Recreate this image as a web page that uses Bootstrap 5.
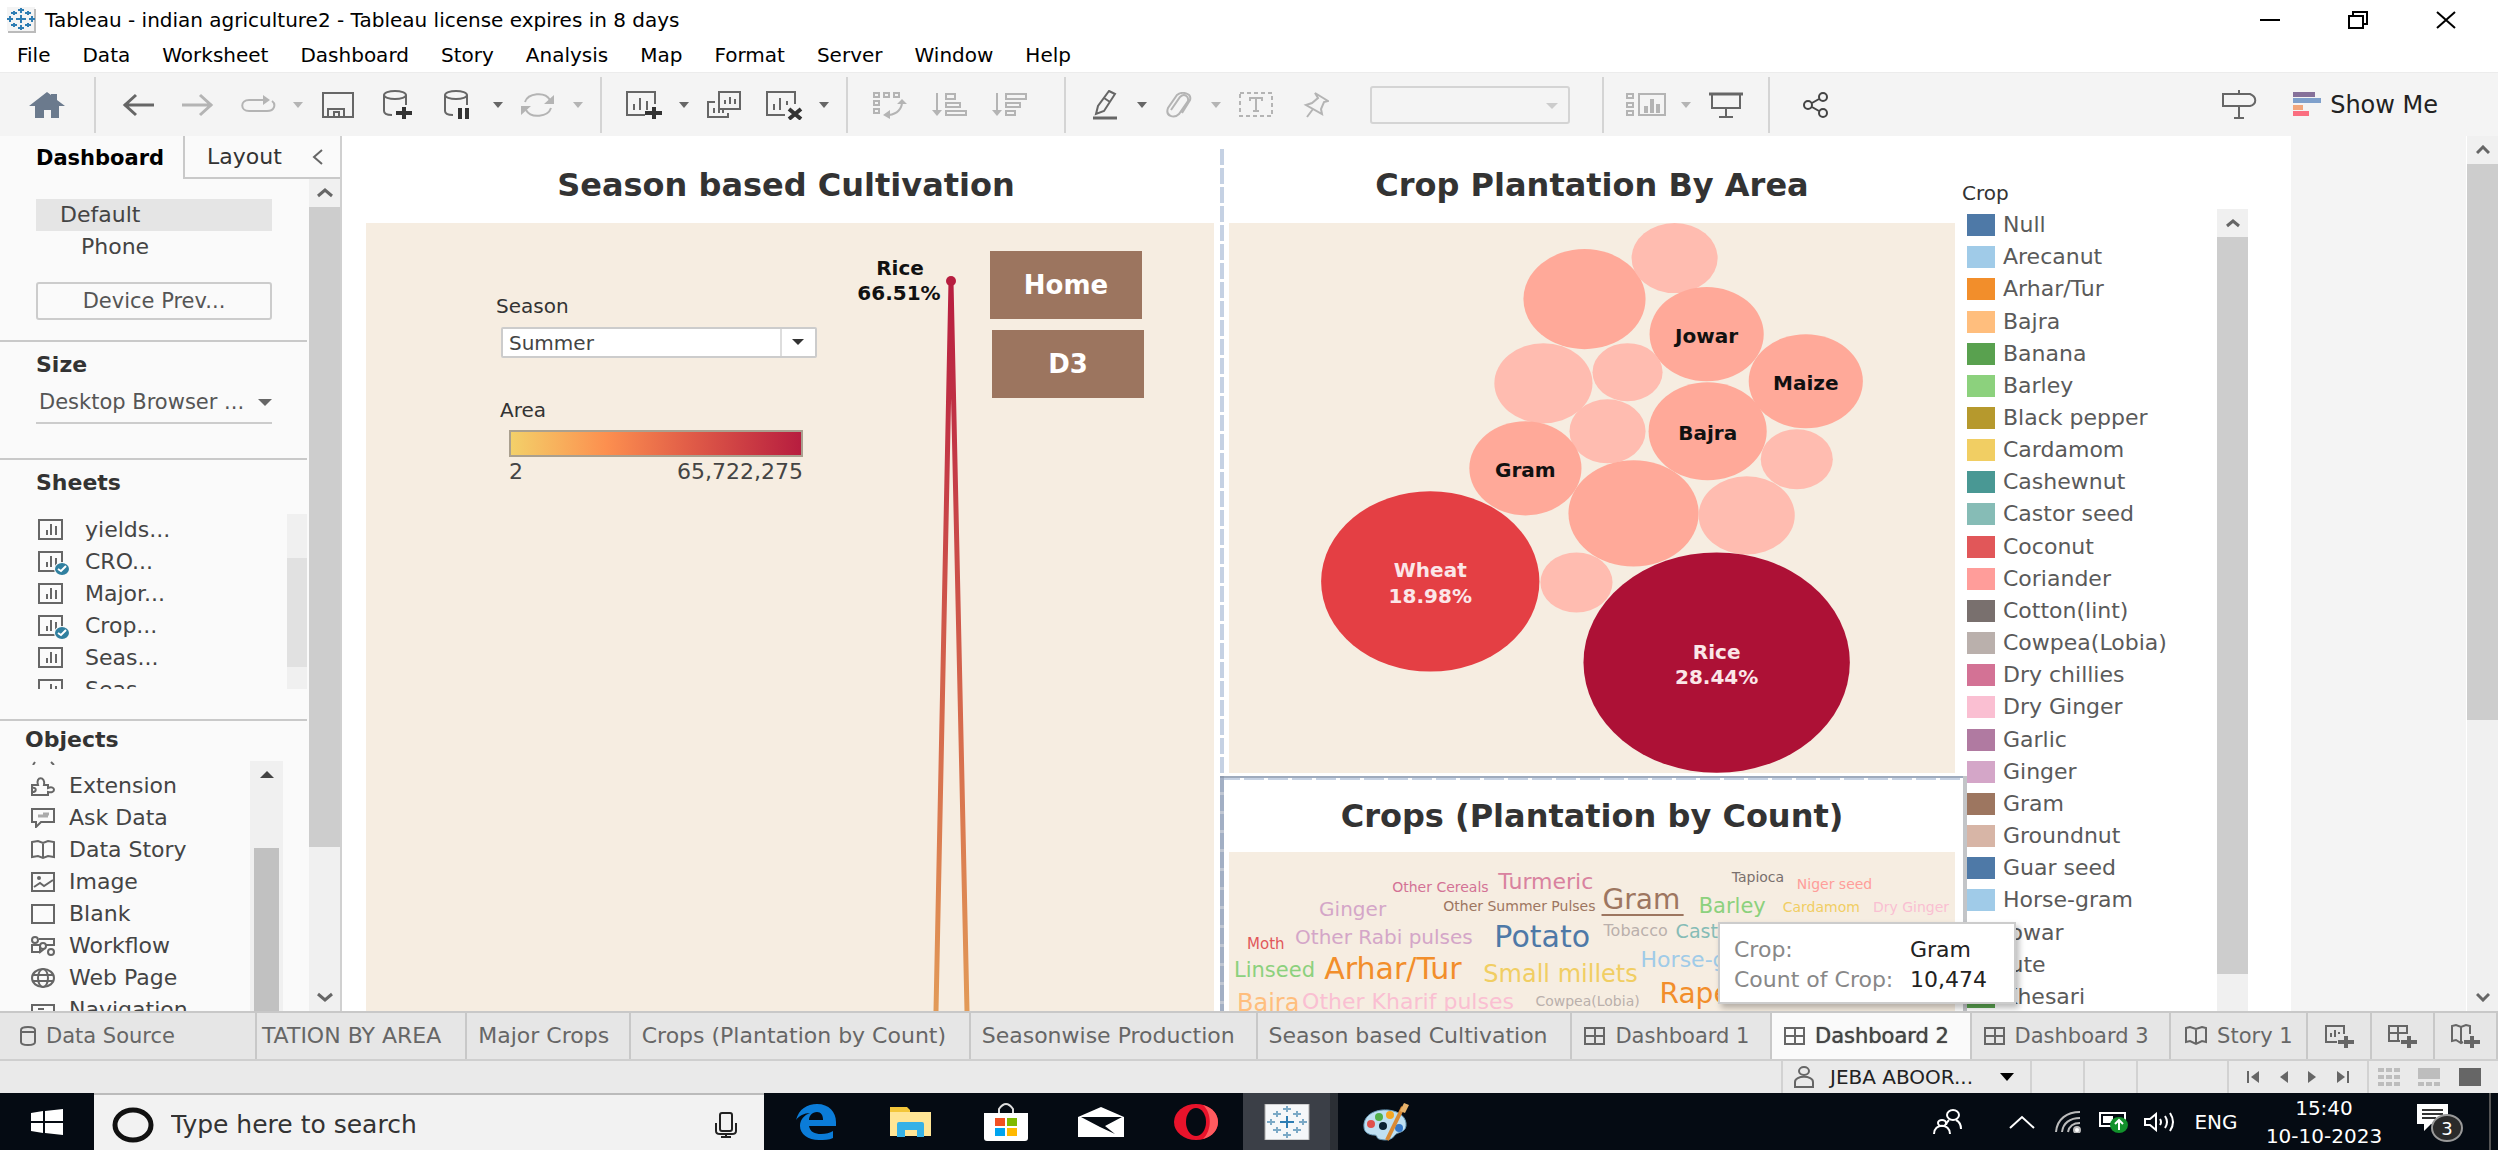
<!DOCTYPE html>
<html lang="en">
<head>
<meta charset="utf-8">
<meta name="viewport" content="width=device-width, initial-scale=1">
<title>Tableau - indian agriculture2</title>
<link href="https://cdn.jsdelivr.net/npm/bootstrap@5.3.0/dist/css/bootstrap.min.css" rel="stylesheet">
<style>
:root{--line:#c9c9c9;--ink:#333;--mid:#666;--cream:#f6ede1;--thumb:#cdcdcd}
body{font-family:"DejaVu Sans",Verdana,sans-serif;font-size:22px;line-height:32px;color:#444;height:100vh;overflow:hidden;background:#fff}
svg{display:block;flex:none}
.ic{fill:none;stroke:#666;stroke-width:2}
.ic .f{fill:#666;stroke:none}
.dim{stroke:#b4b4b4}.dim .f{fill:#b4b4b4}
.plain{border:0;background:none;padding:0;color:inherit;font:inherit;display:flex;align-items:center;justify-content:center}
/* window frame */
.titlebar{height:40px;font-size:20px;color:#000;padding-left:7px}
.win-ctl{width:88px;height:36px}
.menubar{height:32px;padding-left:1px}
.menubar a{font-size:20px;line-height:31px;color:#000;padding:0 16px;text-decoration:none}
/* toolbar */
.toolbar-strip{height:64px;background:#f4f4f4;border-top:1px solid #ececec}
.tgroup{height:56px;padding:0 12px;border-right:2px solid #d4d4d4;display:flex;align-items:center}
.tgroup.wide{padding-right:24px}
.home-slot{width:94px}
.tb{width:60px;height:44px}.tb-s{width:54px}
.caret-btn{width:20px;height:44px}
.caret-btn::before{content:"";border:5px solid transparent;border-top:6px solid #666;border-bottom:0}
.caret-btn.off::before{border-top-color:#b4b4b4}
.fit-select{width:200px;height:38px;border:2px solid #d4d4d4;background:#f4f4f4;border-radius:3px;appearance:none;display:block}
.fit-wrap{position:relative;margin:0 20px 0 24px}
.fit-wrap::after{content:"";position:absolute;right:12px;top:17px;border:6px solid transparent;border-top:6px solid #ccc;border-bottom:0}
.show-me{font-size:24px;color:#222;margin:0 60px 0 24px}
/* side panel */
.side{width:342px;flex:none;background:#fafafa;border-right:2px solid #d0d0d0}
.side-tabs{height:43px}
.side-tabs .on{width:183px;padding-left:36px;font-weight:700;color:#000;font-size:21px}
.side-tabs .off-tab{border-left:2px solid var(--line);border-bottom:2px solid var(--line);padding-left:22px;color:var(--ink)}
.side-body{width:307px}
.track{background:#f0f0f0;display:flex;flex-direction:column;align-items:center}
.track .arr{height:28px;display:flex;align-items:center}
.thumb{background:var(--thumb);width:100%}
.dev{padding:20px 35px 20px 36px;height:161px;flex:none}
.dev .sel{background:#e5e5e5;height:32px;padding-left:24px}
.dev .ph{padding-left:45px;height:34px}
.dev button{height:38px;width:100%;border:2px solid #ccc;border-radius:3px;background:#fafafa;margin-top:17px;font-size:21px;color:#555}
.sect{border-top:2px solid var(--line)}
.sect h2{font-size:22px;font-weight:700;line-height:32px;margin:0;color:var(--ink)}
.size-sect{height:118px;flex:none;padding:7px 35px 0 36px}
.sheets-sect{height:261px;flex:none}
.sheets-sect h2{padding:7px 0 0 36px;margin-bottom:15px}
.objs-sect h2{padding:3px 0 5px 25px}
.size-sel{position:relative;border-bottom:2px solid #ccc}
.size-sel select{appearance:none;border:0;background:none;width:100%;font-size:21px;color:#555;height:41px;padding:0 0 0 3px}
.size-sel::after,.season-sel::after{content:"";position:absolute;right:0;top:18px;border:7px solid transparent;border-top:7px solid #666;border-bottom:0}
.sheets-list{height:175px;overflow:hidden}
.sheets-list li{height:32px;padding-left:38px;display:flex;align-items:center;gap:16px;white-space:nowrap}
.inner-track{width:20px}
.inner-track div{width:100%;height:109px;margin-top:44px;background:#e1e1e1}
.objs li{height:32px;padding-left:31px;display:flex;align-items:center;gap:12px;white-space:nowrap}
.objs li.peek{height:9px;align-items:flex-start}
.objs-track{width:33px;margin-right:24px;height:260px}
.objs-track div{width:25px;margin-top:59px;background:#c1c1c1}
.side-track{width:31px}
/* dashboard */
.zone-a{flex:848 1 0;padding:0 6px 0 24px;min-width:0}
.zone-b{flex:747 1 0;min-width:0;position:relative}
.zone-c{flex:324 1 0;min-width:0}
.vdash{width:4px;background:repeating-linear-gradient(#c5d1e3 0 16px,#fff 16px 19px);position:absolute;left:0;top:13px;bottom:0}
.sheet-title{font-size:32px;font-weight:700;text-align:center;margin:0;line-height:36px;color:var(--ink);padding:31px 0 20px}
.zone-a .sheet-title{padding-right:8px}
.plot{background:var(--cream);position:relative;overflow:hidden}
.top-sheet{padding:0 12px 0 9px;height:640px}
.sel-sheet{height:235px;padding:0 8px 0 9px;border-right:4px solid #c3c5c8;position:relative;overflow:hidden}
.sel-sheet .sheet-title{padding:22px 0 18px}
.hdash{background:repeating-linear-gradient(90deg,#c5d1e3 0 20px,#fff 20px 24px);border-top:2px solid #9fabbd;box-sizing:content-box;height:2px;position:absolute;left:0;right:-4px;top:0}
.sel-sheet::after{content:"";position:absolute;left:0;top:0;bottom:0;width:4px;background:#7f8ea580}
.ctl{position:absolute;left:130px;top:67px;width:322px}
.ctl .lab{font-size:20px;color:#333;display:block;line-height:32px}
.season-sel{position:relative;margin:5px 0 36px 5px}
.season-sel select{appearance:none;width:316px;height:31px;border:2px solid #ccc;background:#fff;border-radius:2px;padding:0 0 0 6px;font-size:20px;line-height:26px;color:#444;display:block}
.season-sel::after{right:14px;top:12px;border-width:6px;border-bottom:0;border-top-color:#333}
.season-sel::before{content:"";position:absolute;right:36px;top:2px;bottom:2px;border-left:2px solid #ddd}
.ramp{height:27px;width:294px;margin:4px 0 0 13px;border:2px solid #aaa08f;background:linear-gradient(90deg,#f3d069,#fc8f4f 33%,#e25f48 60%,#b71d3f)}
.ramp-lab{width:294px;margin-left:13px;font-size:22px;line-height:30px}
.goto{position:absolute;left:624px;width:152px;height:68px;background:#9c755f;color:#fff;font-weight:700;font-size:26px;border:0}
.goto.g1{top:28px}.goto.g2{top:107px;left:626px}
.drawing text{font-family:"DejaVu Sans",sans-serif}
.legend-head{height:73px;padding-top:42px;font-size:20px;line-height:30px;flex:none;margin-left:-5px;color:var(--ink)}
.legend-list{height:804px}
.legend-list li{flex:1 1 0;display:flex;align-items:center;gap:8px;color:#5a5a5a;white-space:nowrap}
.legend-track{width:31px;margin-right:43px}
.sw{width:28px;height:22px;flex:none}
.tip{position:absolute;left:498px;top:786px;width:298px;height:82px;background:#fff;border:2px solid #ccc;box-shadow:3px 4px 6px #0004;z-index:5;padding:11px 0 0 14px;line-height:30px;color:#888}
.tip dt{font-weight:400;width:176px;float:left;clear:left;white-space:nowrap}.tip dd{margin:0;color:#222}
.gutter{width:175px;background:#f4f4f4;flex:none}
.page-track{width:32px;border-left:1px solid #fff;flex:none}
/* workbook tabs */
.wb{height:50px;background:#e6e6e6;border-top:2px solid #c8c8c8;border-bottom:2px solid #cfcfcf}
.wb a{border-right:2px solid #c8c8c8;display:flex;align-items:center;gap:10px;color:#666;text-decoration:none;white-space:nowrap;overflow:hidden;padding-left:11px;min-width:0;font-size:21px}
.wb a.cur{background:#fafafa;color:#444;text-shadow:0 0 1px #444}
.wb .w1{flex:234 1 0;padding-left:20px}
.wb .w2{flex:184 1 0;padding:0 24px 0 0;justify-content:flex-end}
.wb .w3{flex:150 1 0}.wb .w4{flex:326 1 0}.wb .w5{flex:273 1 0}.wb .w6{flex:301 1 0}
.wb .w2,.wb .w3,.wb .w4,.wb .w5,.wb .w6{font-size:22px}
.wb .w7{flex:185 1 0;padding-left:12px}.wb .w8{flex:121 1 0;padding-left:14px}
.wb .w9{flex:61 1 0;padding:0;justify-content:center}
.statusbar{height:32px;background:#eaeaea;font-size:20px;color:#222}
.statusbar>div{border-left:2px solid #d2d2d2;height:32px;display:flex;align-items:center}
.user-cell{width:249px;padding-left:11px}.cell-s{width:53px}.cell-m{width:91px}.nav-cell{width:140px}.view-cell{width:131px}
/* taskbar */
.taskbar{height:57px;background:#050b13;color:#fff}
.search{width:670px;background:#f2f2f2;border-top:2px solid #bbb;padding:4px 27px 0 17px}
.search input{border:0;background:none;font-size:25px;color:#222;outline:0;padding:0;margin-left:16px}
.search input::placeholder{color:#333;opacity:1}
.app{width:95px}.app.run{background:#3b3f47;border-right:8px solid #2b2f35}
.tray{font-size:20px}
.tr{width:46px}.tr-people{width:102px}.tr-lang{width:66px}
.tr-clock{width:150px;font-size:20px;line-height:28px}
.tr-note{width:90px;padding-left:17px}
.strip{width:9px;border-left:2px solid #555}
</style>
</head>
<body class="d-flex flex-column">

<header class="titlebar d-flex align-items-center flex-shrink-0">
  <svg width="30" height="26" viewBox="0 0 30 26"><path fill="#f4f4f4" d="M0 0h28v24H0z"/><path d="M28 2v23H1" fill="none" stroke="#bbb" stroke-width="2"/><g stroke="#2e7db3" stroke-width="2" fill="none"><path d="M14 8v8M9 12h10M14 1v5M11 3h6M14 18v5M11 21h6M3 9v6M0 12h6M25 9v6M22 12h6M7 4v4M4 6h6M21 4v4M18 6h6M7 16v4M4 18h6M21 16v4M18 18h6"/></g></svg>
  <span class="ms-2">Tableau - indian agriculture2 - Tableau license expires in 8 days</span>
  <div class="ms-auto d-flex me-2">
    <button class="plain win-ctl" aria-label="Minimize"><svg width="20" height="18"><path d="M0 9h20" stroke="#000" stroke-width="2"/></svg></button>
    <button class="plain win-ctl" aria-label="Restore"><svg width="20" height="18" fill="none" stroke="#000" stroke-width="2"><path d="M1 5h14v12H1zM5 5V1h14v12h-4"/></svg></button>
    <button class="plain win-ctl" aria-label="Close"><svg width="20" height="18" stroke="#000" stroke-width="2"><path d="M1 1l18 16M19 1L1 17"/></svg></button>
  </div>
</header>
<nav class="menubar d-flex flex-shrink-0">
  <a href="#">File</a><a href="#">Data</a><a href="#">Worksheet</a><a href="#">Dashboard</a><a href="#">Story</a><a href="#">Analysis</a><a href="#">Map</a><a href="#">Format</a><a href="#">Server</a><a href="#">Window</a><a href="#">Help</a>
</nav>

<div class="toolbar-strip d-flex align-items-center flex-shrink-0">
  <div class="tgroup p-0">
    <button class="plain home-slot" aria-label="Start page"><svg width="36" height="26" viewBox="0 0 36 26"><path fill="#6b7a8d" d="M18 0l4 3V2h6v6l8 6h-6v12h-8v-8h-7v8H6V14H0z"/></svg></button>
  </div>
  <div class="tgroup">
    <button class="plain tb" aria-label="Back"><svg class="ic" width="32" height="24" style="stroke-width:3"><path d="M2 12h30M14 2L3 12l11 10"/></svg></button>
    <button class="plain tb" aria-label="Forward"><svg class="ic dim" width="32" height="24" style="stroke-width:3"><path d="M0 12h30M18 2l11 10-11 10"/></svg></button>
    <button class="plain tb" aria-label="Replay"><svg class="ic dim" width="36" height="20"><path d="M24 5H9c-9 0-9 11 0 11h18c8 0 9-7 5-10"/><path class="f" d="M23 0l7 5-7 5z"/></svg></button>
    <button class="plain caret-btn off" aria-label="Replay options"></button>
    <button class="plain tb" aria-label="Save"><svg class="ic" width="32" height="28"><path d="M1 2h30v24H1zM6 26v-8h16v8M12 26v-5h5v5"/></svg></button>
    <button class="plain tb" aria-label="New data source"><svg class="ic" width="32" height="30"><ellipse cx="13" cy="5" rx="11" ry="4"/><path d="M2 5v16c0 3 4 4 8 4M24 5v10"/><path d="M22 17v12M14 23h16" stroke="#333" stroke-width="4"/></svg></button>
    <button class="plain tb" aria-label="Pause updates"><svg class="ic" width="30" height="30"><ellipse cx="13" cy="5" rx="11" ry="4"/><path d="M2 5v16c0 3 4 4 8 4M24 5v10"/><path d="M17 18v11M24 18v11" stroke="#333" stroke-width="4"/></svg></button>
    <button class="plain caret-btn" aria-label="Pause options"></button>
    <button class="plain tb" aria-label="Refresh"><svg class="ic dim" width="34" height="26"><path d="M4 10C7 1 24-1 29 8M30 16c-3 9-20 11-25 2"/><path class="f" d="M33 3v9H23zM0 23v-9h10z"/></svg></button>
    <button class="plain caret-btn off" aria-label="Refresh options"></button>
  </div>
  <div class="tgroup">
    <button class="plain tb" aria-label="New worksheet"><svg class="ic" width="38" height="30"><path d="M20 25H2V2h28v12M9 20v-6M15 20V8M22 20v-9"/><path d="M29 17v12M20 23h17" stroke="#333" stroke-width="4"/></svg></button>
    <button class="plain caret-btn" aria-label="New worksheet options"></button>
    <button class="plain tb" aria-label="Duplicate"><svg class="ic" width="34" height="28"><path d="M12 1h21v17H12zM18 13V9M23 13V6M28 13V8M8 11H1v15h20v-4M7 22v-5M12 22v-3M16 22v-3"/></svg></button>
    <button class="plain tb" aria-label="Clear sheet"><svg class="ic" width="38" height="30"><path d="M20 25H2V2h28v12M9 20v-6M15 20V8M22 15v-4"/><path d="M24 19l12 10M36 19L24 29" stroke="#333" stroke-width="4"/></svg></button>
    <button class="plain caret-btn" aria-label="Clear options"></button>
  </div>
  <div class="tgroup wide">
    <button class="plain tb" aria-label="Swap"><svg class="ic dim" width="34" height="28"><path d="M1 2h5v4H1zM11 2h5v4h-5zM21 2h5v4h-5zM1 10h5v4H1zM1 18h5v4H1zM29 11c0 7-5 12-13 13"/><path class="f" d="M24 13l5-5 5 5zM17 19v9l-7-4z"/></svg></button>
    <button class="plain tb" aria-label="Sort ascending"><svg class="ic dim" width="36" height="24"><path d="M5 0v19M14 1h9v5h-9zM14 10h14v4H14zM14 18h20v4H14z"/><path class="f" d="M0 17h10l-5 6z"/></svg></button>
    <button class="plain tb" aria-label="Sort descending"><svg class="ic dim" width="36" height="24"><path d="M5 0v19M14 1h20v5H14zM14 10h14v4H14zM14 18h9v4h-9z"/><path class="f" d="M0 17h10l-5 6z"/></svg></button>
  </div>
  <div class="tgroup">
    <button class="plain tb tb-s" aria-label="Highlight"><svg class="ic" width="26" height="30"><path d="M17 1l6 3-11 17-8 3 2-8zM12 8l6 4"/><path d="M1 28h24" stroke-width="3"/></svg></button>
    <button class="plain caret-btn" aria-label="Highlight options"></button>
    <button class="plain tb tb-s" aria-label="Group"><svg class="ic dim" width="26" height="26"><path d="M5 18L14 5c4-4 9-1 8 4l-9 13c-5 5-14 2-11-6L11 3c5-4 15-2 13 5l-8 13"/></svg></button>
    <button class="plain caret-btn off" aria-label="Group options"></button>
    <button class="plain tb" aria-label="Show mark labels"><svg class="ic dim" width="34" height="26"><path d="M1 1h32v23H1z" stroke-dasharray="4 3"/><path d="M11 9V6h12v3M17 6v13M14 19h6"/></svg></button>
    <button class="plain tb" aria-label="Fix axes"><svg class="ic dim" width="26" height="26"><path d="M12 1l13 8-4 1-3 7 1 5L3 13l6-2 6-5zM10 17l-6 8"/></svg></button>
    <div class="fit-wrap"><select class="fit-select" aria-label="Fit"><option></option></select></div>
  </div>
  <div class="tgroup">
    <button class="plain tb" aria-label="Show cards"><svg class="ic dim" width="40" height="24"><path d="M1 1h6v4H1zM1 10h6v4H1zM1 18h6v4H1zM13 1h26v21H13z"/><path d="M20 20v-7M26 20V6M32 20v-9" stroke-width="4"/></svg></button>
    <button class="plain caret-btn off" aria-label="Card options"></button>
    <button class="plain tb" aria-label="Presentation mode"><svg class="ic" width="34" height="26"><path d="M3 2v14h28V2M17 16v8M10 25h14"/><path d="M0 2h34" stroke-width="3"/></svg></button>
  </div>
  <button class="plain tb ms-3" aria-label="Share"><svg class="ic" width="28" height="26" style="stroke:#444"><circle cx="6" cy="13" r="4"/><circle cx="21" cy="5" r="4"/><circle cx="21" cy="21" r="4"/><path d="M10 11l7-4M10 15l7 4"/></svg></button>
  <button class="plain tb ms-auto" aria-label="Guide"><svg class="ic" width="36" height="30"><path d="M18 0v4M2 4h27c7 3 7 10 0 12H2zM18 16v12M13 28h10"/></svg></button>
  <button class="plain show-me"><svg width="29" height="26" class="me-2"><path fill="#86719a" d="M0 0h22v5H0z"/><path fill="#7fa0cb" d="M0 6h28v5H0z"/><path fill="#f2a67c" d="M0 13h10v5H0z"/><path fill="#fa6e80" d="M0 19h16v5H0z"/></svg>Show Me</button>
</div>

<div class="d-flex flex-fill overflow-hidden" style="min-height:0">
  <aside class="side d-flex flex-column">
    <div class="side-tabs d-flex align-items-stretch flex-shrink-0">
      <button class="plain on justify-content-start">Dashboard</button>
      <button class="plain off-tab flex-fill justify-content-between pe-3">Layout <svg class="ic" width="12" height="16"><path d="M10 1L2 8l8 7"/></svg></button>
    </div>
    <div class="d-flex flex-fill" style="min-height:0">
      <div class="side-body d-flex flex-column">
        <div class="dev"><div class="sel">Default</div><div class="ph">Phone</div><button>Device Prev...</button></div>
        <div class="sect size-sect"><h2>Size</h2><div class="size-sel"><select aria-label="Size"><option>Desktop Browser ...</option></select></div></div>
        <div class="sect sheets-sect">
          <h2>Sheets</h2>
          <div class="d-flex">
            <ul class="sheets-list list-unstyled m-0 flex-fill" id="sheets"></ul>
            <div class="track inner-track"><div></div></div>
          </div>
        </div>
        <div class="sect objs-sect flex-fill overflow-hidden">
          <h2>Objects</h2>
          <div class="d-flex">
            <ul class="objs list-unstyled m-0 flex-fill" id="objects"></ul>
            <div class="track objs-track"><svg width="14" height="28"><path d="M0 17h14L7 10z" fill="#444"/></svg><div class="flex-fill"></div></div>
          </div>
        </div>
      </div>
      <div class="track side-track ms-auto">
        <div class="arr"><svg class="ic" width="16" height="10" style="stroke-width:3"><path d="M1 8l7-6 7 6"/></svg></div>
        <div class="thumb" style="height:640px"></div>
        <div class="arr mt-auto"><svg class="ic" width="16" height="10" style="stroke-width:3"><path d="M1 2l7 6 7-6"/></svg></div>
      </div>
    </div>
  </aside>

  <main class="d-flex flex-fill" style="min-width:0">
    <section class="zone-a d-flex flex-column">
      <h1 class="sheet-title">Season based Cultivation</h1>
      <div class="plot flex-fill">
        <svg class="drawing" width="848" height="788" viewBox="0 0 848 788">
          <defs><linearGradient id="heat" x1="0" x2="0" y1="58" y2="788" gradientUnits="userSpaceOnUse"><stop offset="0" stop-color="#b71d3f"/><stop offset=".25" stop-color="#c43a46"/><stop offset=".6" stop-color="#d66a4d"/><stop offset="1" stop-color="#e29a57"/></linearGradient></defs>
          <path d="M570 788L585 58L601 788" fill="none" stroke="url(#heat)" stroke-width="5" stroke-linejoin="round"/>
          <circle cx="585" cy="58" r="5" fill="#b71d3f"/>
          <g font-size="20" font-weight="700" text-anchor="middle" fill="#111"><text x="534" y="52">Rice</text><text x="533" y="77">66.51%</text></g>
        </svg>
        <div class="ctl">
          <label class="lab" for="season">Season</label>
          <div class="season-sel"><select id="season"><option>Summer</option></select></div>
          <span class="lab ps-1">Area</span>
          <div class="ramp"></div>
          <div class="ramp-lab d-flex justify-content-between"><span>2</span><span>65,722,275</span></div>
        </div>
        <button class="goto g1">Home</button>
        <button class="goto g2">D3</button>
      </div>
    </section>

    <section class="zone-b">
      <div class="vdash"></div>
      <div class="top-sheet">
        <h1 class="sheet-title">Crop Plantation By Area</h1>
        <div class="plot"><svg class="drawing w-100" viewBox="0 0 725 549" id="bubbles"></svg></div>
      </div>
      <div class="sel-sheet">
        <div class="hdash"></div>
        <h1 class="sheet-title">Crops (Plantation by Count)</h1>
        <div class="plot"><svg class="drawing w-100" viewBox="0 0 725 170" id="cloud"></svg></div>
      </div>
      <dl class="tip"><dt>Crop:</dt><dd>Gram</dd><dt>Count of Crop:</dt><dd>10,474</dd></dl>
    </section>

    <section class="zone-c d-flex flex-column">
      <div class="legend-head">Crop</div>
      <div class="d-flex flex-fill justify-content-between">
        <ul class="legend-list list-unstyled m-0 d-flex flex-column" id="legend"></ul>
        <div class="track legend-track">
          <div class="arr"><svg class="ic" width="14" height="9" style="stroke-width:3"><path d="M1 7l6-5 6 5"/></svg></div>
          <div class="thumb" style="height:737px"></div>
        </div>
      </div>
    </section>
    <div class="gutter"></div>
    <div class="track page-track">
      <div class="arr"><svg class="ic" width="14" height="10" style="stroke-width:3"><path d="M1 8l6-6 6 6"/></svg></div>
      <div class="thumb" style="height:556px"></div>
      <div class="arr mt-auto"><svg class="ic" width="14" height="10" style="stroke-width:3"><path d="M1 2l6 6 6-6"/></svg></div>
    </div>
  </main>
</div>

<nav class="wb d-flex align-items-stretch flex-shrink-0">
  <a class="w1" href="#"><svg class="ic" width="16" height="20"><path d="M1 4v12c0 4 14 4 14 0V4c0-4-14-4-14 0zM1 6h14"/></svg>Data Source</a>
  <a class="w2" href="#">TATION BY AREA</a>
  <a class="w3" href="#">Major Crops</a>
  <a class="w4" href="#">Crops (Plantation by Count)</a>
  <a class="w5" href="#">Seasonwise Production</a>
  <a class="w6" href="#">Season based Cultivation</a>
  <a class="w7" href="#"><svg class="ic" width="21" height="18"><path d="M1 1h19v16H1zM1 9h19M11 1v16"/></svg>Dashboard 1</a>
  <a class="w7 cur" href="#"><svg class="ic" width="21" height="18"><path d="M1 1h19v16H1zM1 9h19M11 1v16"/></svg>Dashboard 2</a>
  <a class="w7" href="#"><svg class="ic" width="21" height="18"><path d="M1 1h19v16H1zM1 9h19M11 1v16"/></svg>Dashboard 3</a>
  <a class="w8" href="#"><svg class="ic" width="22" height="20"><path d="M1 2l4-1 6 2 6-2 4 1v14l-4-1-6 3-6-3-4 1zM11 3v15"/></svg>Story 1</a>
  <a class="w9" href="#" aria-label="New worksheet"><svg class="ic" width="30" height="24"><path d="M13 18H2V2h18v8M7 13V9M11 13V6M15 10V8"/><path d="M22 12v12M14 18h16" stroke-width="4"/></svg></a>
  <a class="w9" href="#" aria-label="New dashboard"><svg class="ic" width="30" height="24"><path d="M13 17H2V2h18v8M2 9h18M11 2v15"/><path d="M22 12v12M14 18h16" stroke-width="4"/></svg></a>
  <a class="w9" href="#" aria-label="New story"><svg class="ic" width="30" height="24"><path d="M13 18l-2 1-5-3-4 1V2l4-1 5 2 5-2 4 1v8M11 3v16"/><path d="M22 12v12M14 18h16" stroke-width="4"/></svg></a>
</nav>
<div class="statusbar d-flex justify-content-end flex-shrink-0">
  <div class="user-cell"><svg class="ic me-3" width="20" height="22"><ellipse cx="10" cy="5" rx="5" ry="4"/><path d="M1 21v-5c0-7 18-7 18 0v5z"/></svg>JEBA ABOOR...<svg width="14" height="8" class="ms-auto me-3"><path d="M0 0h14L7 8z"/></svg></div>
  <div class="cell-s"></div><div class="cell-s"></div><div class="cell-m"></div>
  <div class="nav-cell justify-content-around px-2">
    <svg class="ic" width="12" height="12"><path d="M1 0v12"/><path class="f" d="M12 0v12L4 6z"/></svg>
    <svg class="ic" width="8" height="12"><path class="f" d="M8 0v12L0 6z"/></svg>
    <svg class="ic" width="8" height="12"><path class="f" d="M0 0v12l8-6z"/></svg>
    <svg class="ic" width="12" height="12"><path d="M11 0v12"/><path class="f" d="M0 0v12l8-6z"/></svg>
  </div>
  <div class="view-cell justify-content-around pe-2">
    <svg width="22" height="18" fill="#bdbdbd"><path d="M0 0h6v4H0zM8 0h6v4H8zM16 0h6v4h-6zM0 7h6v4H0zM8 7h6v4H8zM16 7h6v4h-6zM0 14h6v4H0zM8 14h6v4H8zM16 14h6v4h-6z"/></svg>
    <svg width="22" height="18" fill="#bdbdbd"><path d="M0 0h22v11H0zM0 14h6v4H0zM8 14h6v4H8zM16 14h6v4h-6z"/></svg>
    <svg width="22" height="18" fill="#666"><path d="M0 0h22v18H0z"/></svg>
  </div>
</div>

<footer class="taskbar d-flex align-items-stretch flex-shrink-0">
  <button class="plain home-slot" aria-label="Start"><svg width="32" height="26" fill="#fff"><path d="M0 4l12-2v10H0zM14 2l18-2v12H14zM0 14h12v10L0 22zM14 14h18v12l-18-2z"/></svg></button>
  <label class="search d-flex align-items-center">
    <svg width="44" height="36" fill="none" stroke="#111" stroke-width="5"><ellipse cx="22" cy="18" rx="18" ry="15"/></svg>
    <input class="flex-fill" placeholder="Type here to search" aria-label="Search">
    <svg width="22" height="26" fill="none" stroke="#222" stroke-width="2"><rect x="5" y="1" width="12" height="18" rx="2"/><path d="M1 11v8q0 3 4 3h12q4 0 4-3v-8M11 22v3M6 25h10"/></svg>
  </label>
  <div class="d-flex ps-1">
    <button class="plain app" aria-label="Edge"><svg width="40" height="36" viewBox="0 0 40 36"><path fill="#0b7cd8" d="M0 16C3 5 11 0 21 0c12 0 19 8 19 18v4H13c1 6 6 8 12 8 5 0 9-1 12-3v7c-4 2-9 2-14 2C12 36 4 30 4 22c0-6 4-11 10-13C8 9 3 12 0 16zm13 0h14c0-5-2-8-6-8-5 0-8 4-8 8z"/></svg></button>
    <button class="plain app" aria-label="File Explorer"><svg width="43" height="30" viewBox="0 0 43 30"><path fill="#f3c63a" d="M1 0h17l3 3v5H1z"/><path fill="#ffe595" d="M1 5h41v24H1z"/><path fill="#35b1e6" d="M8 30V17q0-2 2-2h23q2 0 2 2v13h-7v-7H16v7z"/></svg></button>
    <button class="plain app" aria-label="Store"><svg width="46" height="38" viewBox="0 0 46 38"><path fill="none" stroke="#ddd" stroke-width="2" d="M16 12V6q7-10 14 0v6"/><path fill="#fff" d="M1 10h44v25q0 3-3 3H4q-3 0-3-3z"/><path fill="#f25022" d="M12 15h10v8H12z"/><path fill="#7fba00" d="M24 15h10v8H24z"/><path fill="#00a4ef" d="M12 25h10v8H12z"/><path fill="#ffb900" d="M24 25h10v8H24z"/></svg></button>
    <button class="plain app" aria-label="Mail"><svg width="46" height="30" viewBox="0 0 46 30"><path fill="#fff" d="M0 10L23 0l23 10v20H0z"/><path fill="#050b13" d="M3 10h41L27 19l10 8-15-7z"/></svg></button>
    <button class="plain app" aria-label="Opera"><svg width="46" height="36" viewBox="0 0 46 36"><ellipse cx="23" cy="18" rx="22" ry="18" fill="#e8132b"/><path fill="#ff5b5f" d="M30 1c20 5 20 29 0 34 9-9 9-26 0-34z"/><ellipse cx="23" cy="18" rx="10" ry="14" fill="#050b13"/></svg></button>
    <button class="plain app run" aria-label="Tableau"><svg width="46" height="36" viewBox="0 0 46 36"><path fill="#f5f7f9" stroke="#aaa" d="M1 0h44v36H1z"/><path stroke="#2e7db3" stroke-width="2" d="M23 12v12M16 18h14"/><path stroke="#7ba9c6" stroke-width="2" fill="none" d="M23 2v6M19 5h8M23 28v6M19 31h8M7 15v6M3 18h8M39 15v6M35 18h8M13 7v6M9 10h8M33 7v6M29 10h8M13 23v6M9 26h8M33 23v6M29 26h8"/></svg></button>
    <button class="plain app" aria-label="Paint"><svg width="46" height="38" viewBox="0 0 46 38"><path fill="#bfe0f2" stroke="#6a9bb8" d="M1 24C0 12 12 6 25 7c12 1 19 8 18 16-1 7-9 6-11 9-3 5-9 6-16 4-3-1-1-4-5-4S1 30 1 24z"/><circle cx="8" cy="21" r="4" fill="#e0514b"/><circle cx="16" cy="14" r="4" fill="#52b04a"/><circle cx="27" cy="12" r="4" fill="#f5a623"/><circle cx="20" cy="23" r="4" fill="#0b2233"/><circle cx="36" cy="25" r="4" fill="#3478c8"/><path d="M24 37L40 4" stroke="#d98a35" stroke-width="4"/><path d="M37 8l4-8 5 2-4 8z" fill="#e8b36b"/></svg></button>
  </div>
  <div class="tray d-flex align-items-stretch ms-auto">
    <button class="plain tr-people" aria-label="People"><svg width="30" height="26" fill="none" stroke="#fff" stroke-width="2"><ellipse cx="20" cy="6" rx="6" ry="5"/><path d="M16 11c-2 2-3 3-3 5M23 11c4 2 5 5 5 9"/><ellipse cx="9" cy="14" rx="4" ry="3"/><path d="M1 25c0-11 16-11 16 0"/></svg></button>
    <button class="plain tr" aria-label="Hidden icons"><svg width="26" height="14" fill="none" stroke="#fff" stroke-width="2"><path d="M1 13L13 2l12 11"/></svg></button>
    <button class="plain tr" aria-label="Network"><svg width="26" height="22" fill="none" stroke="#bbb" stroke-width="2"><path d="M1 21C2 8 12 1 25 1M7 21C8 12 15 7 25 7M13 21c1-5 5-9 12-9"/><circle cx="22" cy="19" r="3" fill="#fff"/></svg></button>
    <button class="plain tr" aria-label="Battery"><svg width="30" height="22"><path fill="none" stroke="#fff" stroke-width="2" d="M1 2h25v13H1z"/><path fill="#fff" d="M4 5h10v7H4z"/><ellipse cx="20" cy="14" rx="9" ry="8" fill="#12912b"/><path stroke="#fff" stroke-width="2" fill="none" d="M20 19v-9M16 13l4-4 4 4"/></svg></button>
    <button class="plain tr" aria-label="Volume"><svg width="32" height="20" fill="none" stroke="#fff" stroke-width="2"><path d="M1 7h5l6-5v16l-6-5H1zM16 7q2 3 0 6M21 4q4 6 0 12M26 1q6 9 0 18"/></svg></button>
    <button class="plain tr-lang">ENG</button>
    <button class="plain flex-column tr-clock"><span>15:40</span><span>10-10-2023</span></button>
    <button class="plain justify-content-start tr-note" aria-label="Notifications"><svg width="50" height="40" viewBox="0 0 50 40"><path fill="#fff" d="M1 2h31v20H15l-7 7v-7H1z"/><path stroke="#333" stroke-width="2" d="M6 8h21M6 12h21M6 16h14"/><ellipse cx="31" cy="26" rx="15" ry="13" fill="#2a2a2a" stroke="#999" stroke-width="2"/><text x="31" y="33" fill="#fff" font-size="18" text-anchor="middle" font-family="DejaVu Sans">3</text></svg></button>
    <div class="strip"></div>
  </div>
</footer>

<script src="https://cdn.jsdelivr.net/npm/bootstrap@5.3.0/dist/js/bootstrap.bundle.min.js"></script>
<script>
const byId = id => document.getElementById(id);

// Legend colours follow the workbook's categorical palette
byId('legend').innerHTML = [
  ['Null','#4e79a7'],['Arecanut','#a0cbe8'],['Arhar/Tur','#f28e2b'],['Bajra','#ffbe7d'],['Banana','#59a14f'],['Barley','#8cd17d'],
  ['Black pepper','#b6992d'],['Cardamom','#f1ce63'],['Cashewnut','#499894'],['Castor seed','#86bcb6'],['Coconut','#e15759'],['Coriander','#ff9d9a'],
  ['Cotton(lint)','#79706e'],['Cowpea(Lobia)','#bab0ac'],['Dry chillies','#d37295'],['Dry Ginger','#fabfd2'],['Garlic','#b07aa1'],['Ginger','#d4a6c8'],
  ['Gram','#9d7660'],['Groundnut','#d7b5a6'],['Guar seed','#4e79a7'],['Horse-gram','#a0cbe8'],['Jowar','#f28e2b'],['Jute','#ffbe7d'],['Khesari','#59a14f']
].map(([n,c]) => `<li><span class="sw" style="background:${c}"></span>${n}</li>`).join('');

// Sheets already used on a dashboard carry a tick
const sheetIcon = used => `<svg class="ic" width="31" height="26"><path d="M1 3h23v19H1zM9 18v-5M13 18V7M18 18v-9"/>${used ? '<ellipse cx="24" cy="20" rx="8" ry="7" fill="#fafafa" stroke="none"/><ellipse cx="24" cy="20" rx="7" ry="6" fill="#2f7f9f" stroke="none"/><path d="M20 20l3 2 5-5" stroke="#fff"/>' : ''}</svg>`;
byId('sheets').innerHTML = [['yields...'],['CRO...',1],['Major...'],['Crop...',1],['Seas...'],['Seas...']]
  .map(([n,u]) => `<li>${sheetIcon(u)}${n}</li>`).join('');

// The list is scrolled, so the foot of the item above Extension shows first
byId('objects').innerHTML = '<li class="peek"><svg class="ic" width="26" height="4"><path d="M4 1l-2 3M20 1l3 3"/></svg></li>' + [
  ['Extension','<path d="M1 19V9h6c-3-9 8-9 6 0h4v3c8-3 8 6 0 4v3zM1 12c5-1 5 4 0 4"/>'],
  ['Ask Data','<path d="M1 1h22v13H10l-5 5v-5H1z"/><path d="M7 8h10M12 6h6" stroke-width="3" stroke="#aaa"/>'],
  ['Data Story','<path d="M1 2l6-1 5 2 5-2 6 1v15l-6-1-5 2-5-2-6 1zM12 3v15"/>'],
  ['Image','<path d="M1 1h22v18H1zM3 15l6-4 4 3 9-6"/><circle cx="8" cy="6" r="1"/>'],
  ['Blank','<path d="M1 1h22v18H1z"/>'],
  ['Workflow','<circle cx="4" cy="4" r="3"/><path d="M8 3h15v6H14M1 9h8v7H1zM13 13l-5 4"/><circle cx="12" cy="10" r="3"/><circle cx="20" cy="16" r="3"/>'],
  ['Web Page','<ellipse cx="12" cy="10" rx="11" ry="9"/><ellipse cx="12" cy="10" rx="5" ry="9"/><path d="M2 7h20M2 13h20"/>'],
  ['Navigation','<path d="M1 5h22v12H1zM7 9h6"/>']
].map(([n,p]) => `<li><svg class="ic" width="26" height="20">${p}</svg>${n}</li>`).join('');

// Packed bubbles: cx, cy, rx, ry, fill, label lines
const mid = '#ffa999', light = '#ffbcb0';
byId('bubbles').innerHTML = [
  [355,76,61,50,mid],[445,35,43,35,light],[477,111,57,47,mid,'Jowar'],[576,158,57,47,mid,'Maize'],[314,160,49,40,light],
  [398,149,35,29,light],[378,208,38,32,light],[478,208,59,49,mid,'Bajra'],[296,245,56,47,mid,'Gram'],[567,236,36,30,light],
  [404,290,65,53,mid],[517,292,48,39,light],[347,359,36,30,light],[201,358,109,90,'#e43f44','Wheat','18.98%'],[487,439,133,110,'#ad1136','Rice','28.44%']
].map(([x,y,rx,ry,f,a,b]) => `<ellipse cx="${x}" cy="${y}" rx="${rx}" ry="${ry}" fill="${f}"/>` +
  (a ? `<g font-size="20" font-weight="700" text-anchor="middle" fill="${b ? '#fbe6e8' : '#111'}"><text x="${x}" y="${b ? y-4 : y+9}">${a}</text>${b ? `<text x="${x}" y="${y+21}">${b}</text>` : ''}</g>` : '')).join('');

// Word cloud: text, left, middle, size, colour
byId('cloud').innerHTML = [
  ['Tapioca',502,25,14,'#79706e'],['Niger seed',567,32,14,'#ff9d9a'],['Turmeric',269,29,22,'#d9829f'],['Other Cereals',163,35,14,'#d37295'],
  ['Gram',373,47,28,'#9d7660'],['Ginger',90,57,20,'#d4a6c8'],['Other Summer Pulses',214,54,14,'#9d7660'],['Barley',469,53,21,'#8cd17d'],
  ['Cardamom',553,55,14,'#f1ce63'],['Dry Ginger',643,55,14,'#fabfd2'],['Moth',18,92,15,'#e15759'],['Other Rabi pulses',66,85,20,'#d4a6c8'],
  ['Potato',265,84,30,'#4e79a7'],['Tobacco',374,78,16,'#bab0ac'],['Castor seed',446,79,19,'#86bcb6'],['Horse-gram',411,107,22,'#a0cbe8'],
  ['Linseed',5,117,21,'#8cd17d'],['Arhar/Tur',95,116,30,'#f28e2b'],['Small millets',254,121,24,'#f1ce63'],['Rapeseed',430,141,28,'#f28e2b'],
  ['Bajra',8,150,24,'#ffbe7d'],['Other Kharif pulses',73,149,22,'#fabfd2'],['Cowpea(Lobia)',306,149,14,'#bab0ac']
].map(([t,x,y,s,c]) => `<text x="${x}" y="${Math.round(y + s*.36)}" font-size="${s}" fill="${c}">${t}</text>`).join('') +
  '<path d="M372 63h82" stroke="#9d7660" stroke-width="2"/>';
</script>
</body>
</html>
